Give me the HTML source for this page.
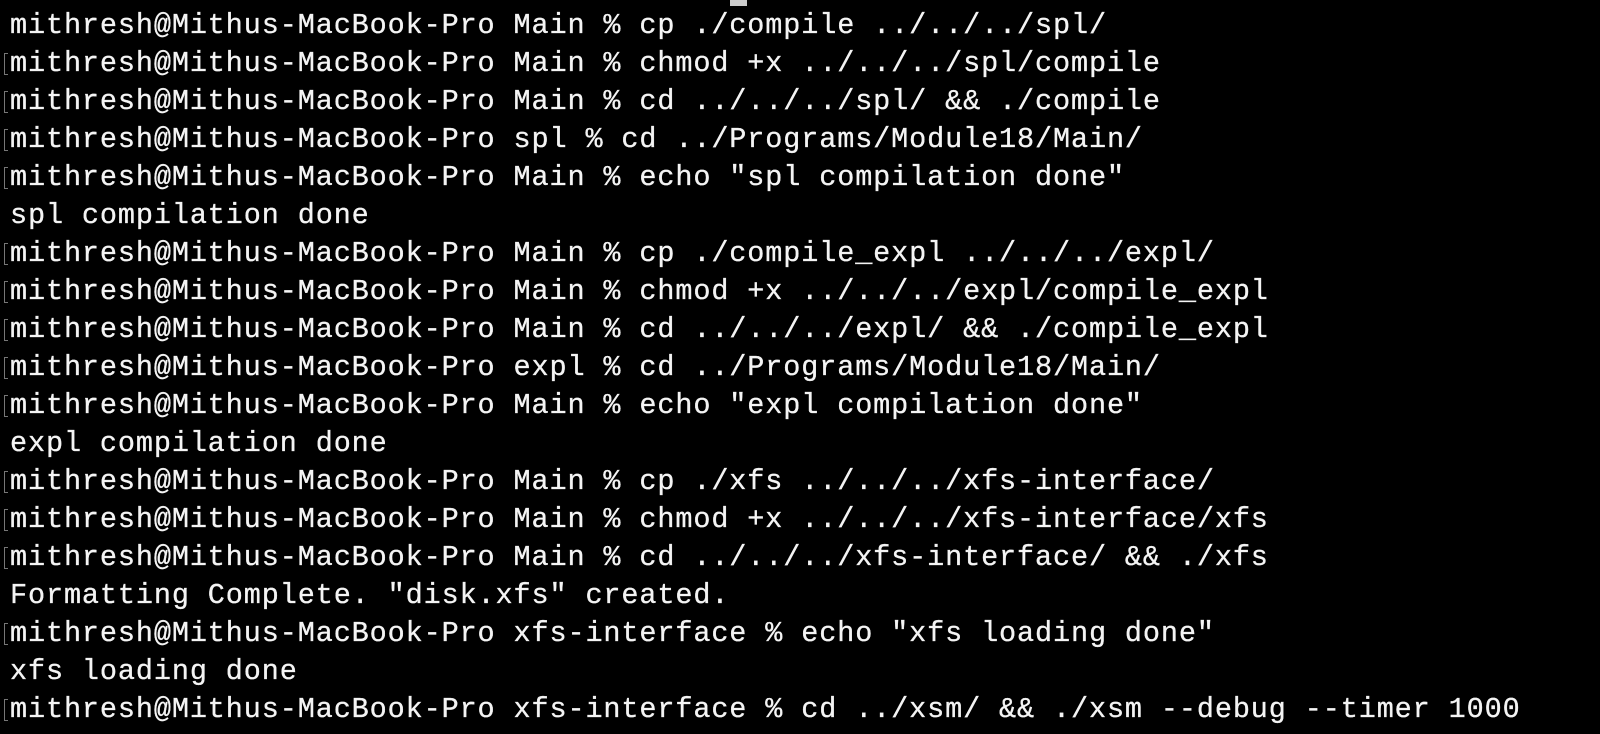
<!DOCTYPE html>
<html><head><style>
html,body{margin:0;padding:0;background:#000;width:1600px;height:734px;overflow:hidden}
.l{position:absolute;left:10px;height:38px;font-family:"Liberation Mono",monospace;font-size:28.5px;letter-spacing:0.88px;line-height:38px;color:#f4f4f4;white-space:pre;-webkit-text-stroke:0.3px #f4f4f4}
.b{position:absolute;left:4px;width:4px;height:22px;border:1px solid #777;border-right:none;box-sizing:border-box}
.cur{position:absolute;left:730px;top:0;width:17px;height:6px;background:#ccc}
</style></head><body>
<div class="cur"></div>
<div class="l" style="top:7px">mithresh@Mithus-MacBook-Pro Main % cp ./compile ../../../spl/</div>
<div class="l" style="top:45px">mithresh@Mithus-MacBook-Pro Main % chmod +x ../../../spl/compile</div>
<div class="l" style="top:83px">mithresh@Mithus-MacBook-Pro Main % cd ../../../spl/ &amp;&amp; ./compile</div>
<div class="l" style="top:121px">mithresh@Mithus-MacBook-Pro spl % cd ../Programs/Module18/Main/</div>
<div class="l" style="top:159px">mithresh@Mithus-MacBook-Pro Main % echo "spl compilation done"</div>
<div class="l" style="top:197px">spl compilation done</div>
<div class="l" style="top:235px">mithresh@Mithus-MacBook-Pro Main % cp ./compile_expl ../../../expl/</div>
<div class="l" style="top:273px">mithresh@Mithus-MacBook-Pro Main % chmod +x ../../../expl/compile_expl</div>
<div class="l" style="top:311px">mithresh@Mithus-MacBook-Pro Main % cd ../../../expl/ &amp;&amp; ./compile_expl</div>
<div class="l" style="top:349px">mithresh@Mithus-MacBook-Pro expl % cd ../Programs/Module18/Main/</div>
<div class="l" style="top:387px">mithresh@Mithus-MacBook-Pro Main % echo "expl compilation done"</div>
<div class="l" style="top:425px">expl compilation done</div>
<div class="l" style="top:463px">mithresh@Mithus-MacBook-Pro Main % cp ./xfs ../../../xfs-interface/</div>
<div class="l" style="top:501px">mithresh@Mithus-MacBook-Pro Main % chmod +x ../../../xfs-interface/xfs</div>
<div class="l" style="top:539px">mithresh@Mithus-MacBook-Pro Main % cd ../../../xfs-interface/ &amp;&amp; ./xfs</div>
<div class="l" style="top:577px">Formatting Complete. "disk.xfs" created.</div>
<div class="l" style="top:615px">mithresh@Mithus-MacBook-Pro xfs-interface % echo "xfs loading done"</div>
<div class="l" style="top:653px">xfs loading done</div>
<div class="l" style="top:691px">mithresh@Mithus-MacBook-Pro xfs-interface % cd ../xsm/ &amp;&amp; ./xsm --debug --timer 1000</div>
<div class="b" style="top:53px"></div>
<div class="b" style="top:91px"></div>
<div class="b" style="top:129px"></div>
<div class="b" style="top:167px"></div>
<div class="b" style="top:243px"></div>
<div class="b" style="top:281px"></div>
<div class="b" style="top:319px"></div>
<div class="b" style="top:357px"></div>
<div class="b" style="top:395px"></div>
<div class="b" style="top:471px"></div>
<div class="b" style="top:509px"></div>
<div class="b" style="top:547px"></div>
<div class="b" style="top:623px"></div>
<div class="b" style="top:699px"></div>
</body></html>
